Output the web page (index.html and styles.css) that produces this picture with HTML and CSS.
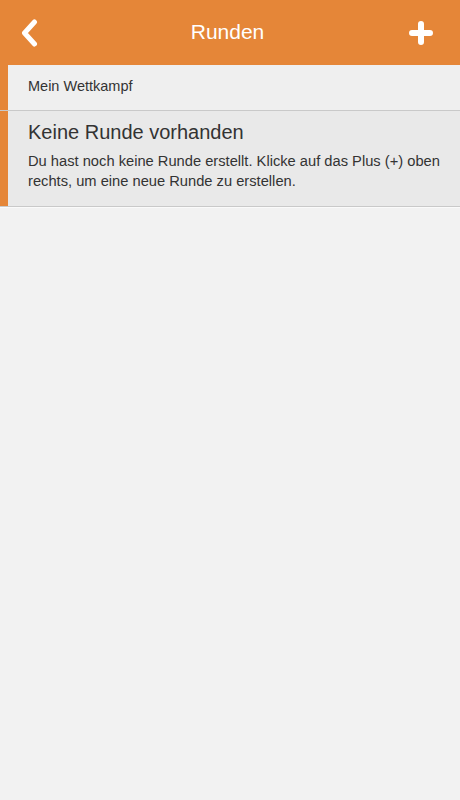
FILE: index.html
```html
<!DOCTYPE html>
<html lang="de">
<head>
<meta charset="utf-8">
<title>Runden</title>
<link rel="stylesheet" href="styles.css">
</head>
<body>
<header class="topbar">
  <button class="icon-btn back" aria-label="Zurück">
    <svg width="18" height="28" viewBox="0 0 18 28"><path d="M13.5 3 L3.5 14 L13.5 25" fill="none" stroke="#fff" stroke-width="5" stroke-linecap="round" stroke-linejoin="round"/></svg>
  </button>
  <h1 class="title">Runden</h1>
  <button class="icon-btn add" aria-label="Hinzufügen">
    <svg width="24" height="24" viewBox="0 0 24 24"><path d="M12 3 V21 M3 12 H21" fill="none" stroke="#fff" stroke-width="6" stroke-linecap="round"/></svg>
  </button>
</header>
<main class="list">
  <div class="row row-head">
    <div class="bar"></div>
    <div class="content"><span class="head-text">Mein Wettkampf</span></div>
  </div>
  <div class="row row-item">
    <div class="bar"></div>
    <div class="content">
      <h2 class="item-title">Keine Runde vorhanden</h2>
      <p class="item-desc">Du hast noch keine Runde erstellt. Klicke auf das Plus (+) oben rechts, um eine neue Runde zu erstellen.</p>
    </div>
  </div>
</main>
</body>
</html>
```
FILE: styles.css
```css
* { box-sizing: border-box; }
html, body { margin: 0; padding: 0; }
body {
  background: #f2f2f2;
  font-family: "Liberation Sans", Arial, sans-serif;
  color: #333;
  width: 460px;
  min-height: 800px;
}
.topbar {
  height: 65px;
  background: #e58638;
  display: flex;
  align-items: center;
  justify-content: space-between;
  padding: 0 25px 2px 16px;
}
.icon-btn {
  background: none;
  border: 0;
  padding: 0;
  display: flex;
  align-items: center;
  justify-content: center;
}
.back { width: 28px; height: 28px; margin-top: 2px; }
.add { width: 28px; height: 28px; margin-top: 2px; }
.title {
  margin: 0;
  font-size: 21px;
  font-weight: normal;
  color: #fff;
  padding-left: 4px;
}
.list { display: flex; flex-direction: column; }
.row {
  display: flex;
  border-bottom: 1px solid #c9c9c9;
}
.bar { width: 8px; background: #e58638; flex: none; }
.content { flex: 1; padding-left: 20px; padding-right: 12px; }
.row-head { height: 46px; background: #efefef; }
.row-head .content { display: flex; align-items: center; padding-bottom: 3px; }
.head-text { font-size: 14.5px; }
.row-item { background: #e9e9e9; box-shadow: 0 1px 0 #fafafa; }
.row-item .content { padding-top: 9px; padding-bottom: 15px; }
.item-title {
  margin: 0;
  font-size: 20px;
  font-weight: normal;
  line-height: 24px;
}
.item-desc {
  margin: 7px 0 0;
  font-size: 14.7px;
  line-height: 20px;
}
```
